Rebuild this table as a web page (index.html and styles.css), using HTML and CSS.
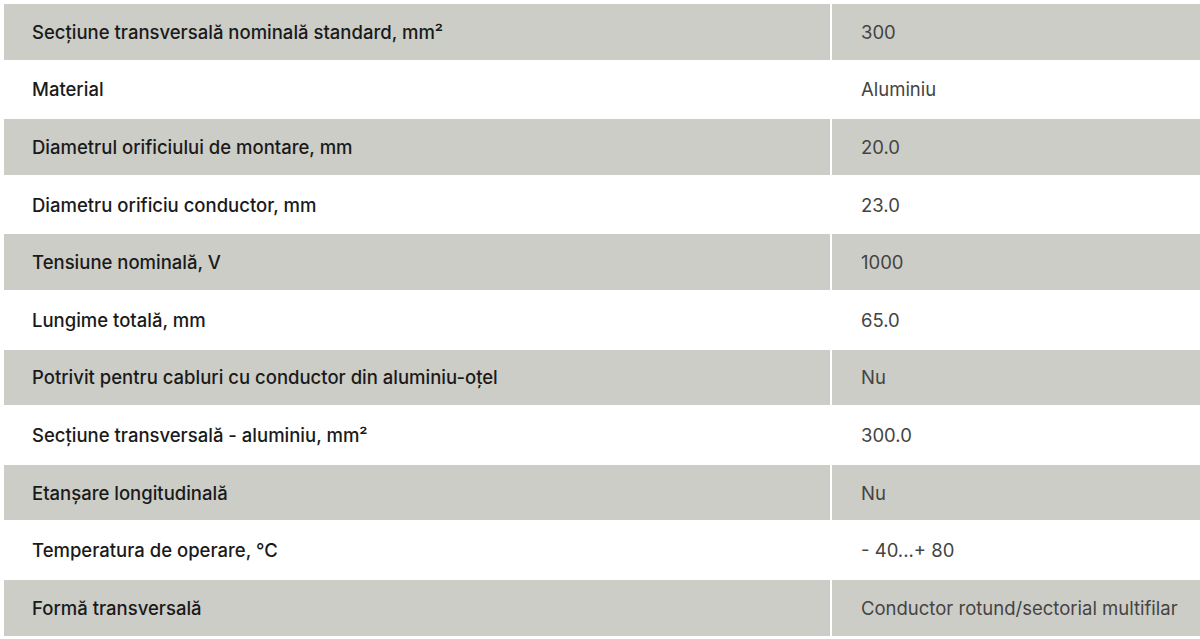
FILE: index.html
```html
<!DOCTYPE html>
<html lang="ro">
<head>
<meta charset="utf-8">
<link rel="stylesheet" href="styles.css">
</head>
<body>
<table class="specs">
  <tbody>
    <tr class="odd"><th>Secțiune transversală nominală standard, mm²</th><td>300</td></tr>
    <tr><th>Material</th><td>Aluminiu</td></tr>
    <tr class="odd"><th>Diametrul orificiului de montare, mm</th><td>20.0</td></tr>
    <tr><th>Diametru orificiu conductor, mm</th><td>23.0</td></tr>
    <tr class="odd"><th>Tensiune nominală, V</th><td>1000</td></tr>
    <tr><th>Lungime totală, mm</th><td>65.0</td></tr>
    <tr class="odd"><th>Potrivit pentru cabluri cu conductor din aluminiu-oțel</th><td>Nu</td></tr>
    <tr><th>Secțiune transversală - aluminiu, mm²</th><td>300.0</td></tr>
    <tr class="odd"><th>Etanșare longitudinală</th><td>Nu</td></tr>
    <tr><th>Temperatura de operare, °C</th><td>- 40...+ 80</td></tr>
    <tr class="odd"><th>Formă transversală</th><td>Conductor rotund/sectorial multifilar</td></tr>
  </tbody>
</table>
</body>
</html>
```
FILE: styles.css
```css
html, body {
  margin: 0;
  padding: 0;
  background: #ffffff;
}
body {
  padding: 2px 0 0 2px;
  font-family: Inter, "Noto Sans", sans-serif;
  overflow: hidden;
}
.specs {
  border-collapse: separate;
  border-spacing: 2px;
  width: 1220px;
  table-layout: fixed;
}
.specs th,
.specs td {
  height: 55.6px;
  padding: 0 0 0 28px;
  text-align: left;
  vertical-align: middle;
  font-size: 18.5px;
  letter-spacing: 0;
  box-sizing: border-box;
}
.specs th {
  width: 826px;
  font-weight: 500;
  color: #1a1a1a;
}
.specs td {
  font-weight: 400;
  color: #444442;
  padding-left: 29px;
}
.specs tr.odd th,
.specs tr.odd td {
  background: #cccdc7;
}
```
